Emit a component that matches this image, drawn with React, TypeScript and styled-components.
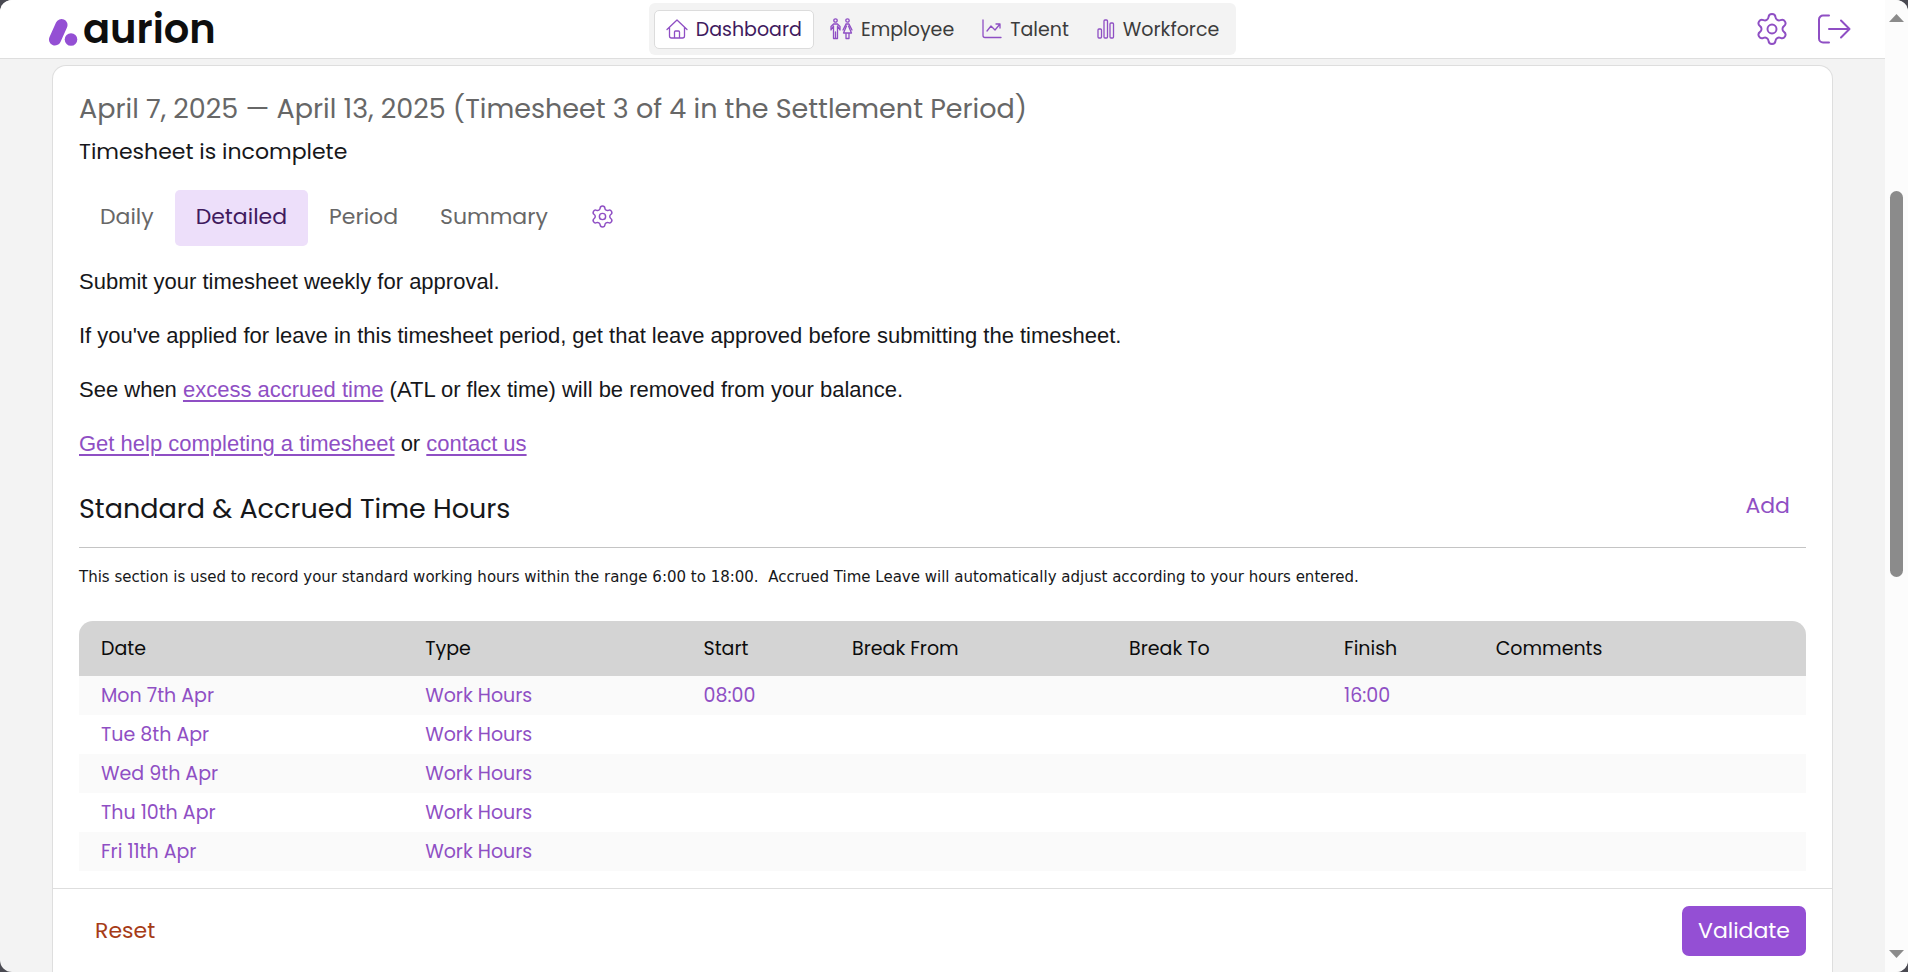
import React from 'react';
import styled, { createGlobalStyle, css } from 'styled-components';
import { Settings } from 'lucide-react';

const purple = '#8f4fc4';
const ui = 'Poppins, Inter, "Liberation Sans", sans-serif';

const GlobalStyle = createGlobalStyle`
  * { box-sizing: border-box; }
  html, body, #root { height: 100%; }
  body { margin: 0; background: #4a4a52; color: #16171a; font-family: ${ui}; }
  button { font-family: inherit; border: 0; background: none; padding: 0; cursor: pointer; }
`;

const Window = styled.div`
  height: 100vh;
  display: flex;
  border-radius: 12px;
  overflow: hidden;
  background: #f3f3f3;
`;

const Page = styled.div`
  flex: 1;
  min-width: 0;
  display: flex;
  flex-direction: column;
`;

const Header = styled.header`
  display: grid;
  grid-template-columns: 1fr auto 1fr;
  align-items: center;
  flex: none;
  height: 59px;
  padding: 0 34px;
  background: #fff;
  border-bottom: 1px solid #dedede;
`;

const Logo = styled.a`
  display: flex;
  align-items: center;
  gap: 5px;
  padding-left: 14px;
  color: #0e0e0e;
  font-size: 40px;
  line-height: 58px;
  font-weight: 600;
  text-decoration: none;
  svg { display: block; margin-top: 6px; }
`;

const MainNav = styled.nav`
  display: flex;
  align-items: center;
  gap: 4px;
  height: 52px;
  padding: 0 5px;
  border-radius: 6px;
  background: #f3f3f3;
`;

const NavLink = styled.a<{ $active?: boolean }>`
  display: flex;
  align-items: center;
  gap: 8px;
  height: 39px;
  padding: 0 11px;
  border: 1px solid transparent;
  border-radius: 5px;
  color: #3c3c3c;
  font-size: 19px;
  text-decoration: none;
  white-space: nowrap;
  svg { display: block; flex: none; }
  ${p => p.$active && css`
    background: #fff;
    border-color: #dcdcdc;
    color: #401a5e;
  `}
`;

const HeaderTools = styled.div`
  display: flex;
  align-items: center;
  justify-content: flex-end;
  gap: 27px;
  svg { display: block; }
`;

const Card = styled.main`
  flex: 1;
  min-height: 0;
  display: flex;
  flex-direction: column;
  margin: 6px 52px 0;
  background: #fff;
  border: 1px solid #dedede;
  border-bottom: 0;
  border-radius: 14px 14px 0 0;
`;

const Content = styled.div`
  flex: 1;
  min-height: 0;
  overflow: hidden;
  padding: 25px 26px 0;
`;

const Title = styled.h1`
  margin: 0;
  color: #676767;
  font-size: 27px;
  line-height: 36px;
  font-weight: 400;
`;

const Status = styled.p`
  margin: 8px 0 0;
  font-size: 22px;
  line-height: 34px;
`;

const Tabs = styled.div`
  display: flex;
  align-items: center;
  margin: 21px 0 20px;
`;

const Tab = styled.button<{ $active?: boolean }>`
  height: 56px;
  padding: 0 21px 4px;
  border-radius: 5px;
  color: ${p => (p.$active ? '#401a5e' : '#676767')};
  background: ${p => (p.$active ? '#eddffa' : 'transparent')};
  font-size: 22px;
  svg { display: block; }
`;

const Notes = styled.div`
  font-family: Arial, "Liberation Sans", sans-serif;
  font-size: 22px;
  line-height: 32px;
  p { margin: 0 0 22px; }
  a { color: ${purple}; text-underline-offset: 3px; text-decoration-thickness: 2px; }
`;

const SectionHead = styled.div`
  display: flex;
  align-items: flex-start;
  justify-content: space-between;
  height: 66px;
  padding-top: 5px;
  border-bottom: 1px solid #c4c4c4;
`;

const SectionTitle = styled.h2`
  margin: 0;
  font-size: 27px;
  line-height: 44px;
  font-weight: 400;
`;

const TextButton = styled.button<{ $danger?: boolean }>`
  padding: 0 16px;
  color: ${p => (p.$danger ? '#a63b16' : purple)};
  font-size: 22px;
  line-height: 38px;
`;

const Hint = styled.p`
  margin: 17px 0 32px;
  font-family: Verdana, "DejaVu Sans", sans-serif;
  font-size: 15px;
  line-height: 24px;
  white-space: pre-wrap;
`;

const Table = styled.table`
  width: 100%;
  table-layout: fixed;
  border-collapse: separate;
  border-spacing: 0;
  font-size: 19px;
  th, td { padding: 0 0 0 22px; text-align: left; font-weight: 400; white-space: nowrap; }
  th { height: 55px; background: #d4d4d4; color: #0c0c0c; }
  th:first-child { border-top-left-radius: 14px; }
  th:last-child { border-top-right-radius: 14px; }
  td { height: 39px; }
  a { color: ${purple}; text-decoration: none; }
  tbody tr:nth-child(odd) { background: #fafafa; }
`;

const Column = styled.col<{ $share: number }>`
  width: ${p => p.$share}%;
`;

const ActionBar = styled.footer`
  flex: none;
  display: flex;
  align-items: center;
  justify-content: space-between;
  height: 84px;
  padding: 0 26px;
  border-top: 1px solid #dedede;
`;

const PrimaryButton = styled.button`
  height: 50px;
  padding: 0 16px;
  border-radius: 7px;
  background: #944fd4;
  color: #fff;
  font-size: 22px;
`;

const ScrollTrack = styled.div`
  flex: none;
  width: 23px;
  display: flex;
  flex-direction: column;
  align-items: center;
  justify-content: space-between;
  padding: 14px 0;
  background: #fcfcfc;
`;

const ScrollRun = styled.div`
  flex: 1;
  display: grid;
  grid-template-rows: 169fr 386fr 373fr;
`;

const ScrollThumb = styled.div`
  grid-row: 2;
  width: 13px;
  border-radius: 7px;
  background: #8b8b8b;
`;

const stroke = { fill: 'none', stroke: purple, strokeWidth: 1.3, strokeLinecap: 'round', strokeLinejoin: 'round' } as const;

const HomeIcon = () => (
  <svg width="22" height="20" viewBox="0 0 22 20" {...stroke}>
    <path d="M1 10.500 11 1l10 9.500M3.500 8.500v8.500a2 2 0 0 0 2 2h11a2 2 0 0 0 2-2V8.500M8.500 19v-6a1 1 0 0 1 1-1h3a1 1 0 0 1 1 1v6" />
  </svg>
);
const PeopleIcon = () => (
  <svg width="23" height="22" viewBox="0 0 23 22" {...stroke}>
    <circle cx="5.500" cy="2.500" r="1.700" />
    <path d="M3.500 20.500V8L1 12V8.500L3.500 6h4L10 8.500V12L7.500 8v12.500M3.500 20.500h4M5.500 14v6.500" />
    <circle cx="17.500" cy="2.500" r="1.700" />
    <path d="M16 6h3l3 6M16 6l-3 6M16.500 8 13.500 15h8l-3-7M16 15v5.500h3V15" />
  </svg>
);
const TrendIcon = () => (
  <svg width="20" height="20" viewBox="0 0 20 20" {...stroke}>
    <path d="M1 1v15.500a2 2 0 0 0 2 2h16M5 12l4-5 4 4 5-6M14 5h4v4" />
  </svg>
);
const BarsIcon = () => (
  <svg width="18" height="20" viewBox="0 0 18 20" {...stroke}>
    <rect x="1" y="10" width="3.500" height="9" rx="1" />
    <rect x="7" y="1" width="3.500" height="18" rx="1" />
    <rect x="13" y="4" width="3.500" height="15" rx="1" />
  </svg>
);

const menu = [
  { label: 'Dashboard', icon: <HomeIcon />, active: true },
  { label: 'Employee', icon: <PeopleIcon /> },
  { label: 'Talent', icon: <TrendIcon /> },
  { label: 'Workforce', icon: <BarsIcon /> },
];

const columns = [
  { label: 'Date', share: 18.77 },
  { label: 'Type', share: 16.12 },
  { label: 'Start', share: 8.6 },
  { label: 'Break From', share: 16.04 },
  { label: 'Break To', share: 12.45 },
  { label: 'Finish', share: 8.78 },
  { label: 'Comments', share: 19.24 },
];

const rows = [
  ['Mon 7th Apr', 'Work Hours', '08:00', '', '', '16:00', ''],
  ['Tue 8th Apr', 'Work Hours', '', '', '', '', ''],
  ['Wed 9th Apr', 'Work Hours', '', '', '', '', ''],
  ['Thu 10th Apr', 'Work Hours', '', '', '', '', ''],
  ['Fri 11th Apr', 'Work Hours', '', '', '', '', ''],
];

export default function App() {
  return (
    <>
      <GlobalStyle />
      <Window>
        <Page>
          <Header>
            <Logo href="#">
              <svg width="30" height="29" viewBox="0 0 30 29" aria-hidden="true">
                <path d="M7 21.500 13.500 7" stroke="#944fd4" strokeWidth="12" strokeLinecap="round" />
                <circle cx="23" cy="21.500" r="6.300" fill="#944fd4" />
              </svg>
              aurion
            </Logo>
            <MainNav>
              {menu.map(m => (
                <NavLink key={m.label} href="#" $active={m.active}>{m.icon}{m.label}</NavLink>
              ))}
            </MainNav>
            <HeaderTools>
              <button aria-label="Settings"><Settings size={36} strokeWidth={1.3} color={purple} /></button>
              <button aria-label="Sign out">
                <svg width="34" height="32" viewBox="0 0 34 32" fill="none" stroke={purple} strokeWidth="2" strokeLinecap="round" strokeLinejoin="round">
                  <path d="M12 2.500H6a4 4 0 0 0-4 4v19a4 4 0 0 0 4 4h6M12 16h20M24 7.500 32.500 16 24 24.500" />
                </svg>
              </button>
            </HeaderTools>
          </Header>
          <Card>
            <Content>
              <Title>April 7, 2025 — April 13, 2025 (Timesheet 3 of 4 in the Settlement Period)</Title>
              <Status>Timesheet is incomplete</Status>
              <Tabs>
                <Tab>Daily</Tab>
                <Tab $active>Detailed</Tab>
                <Tab>Period</Tab>
                <Tab>Summary</Tab>
                <Tab aria-label="Timesheet settings"><Settings size={25} strokeWidth={1.4} color={purple} /></Tab>
              </Tabs>
              <Notes>
                <p>Submit your timesheet weekly for approval.</p>
                <p>If you've applied for leave in this timesheet period, get that leave approved before submitting the timesheet.</p>
                <p>See when <a href="#">excess accrued time</a> (ATL or flex time) will be removed from your balance.</p>
                <p><a href="#">Get help completing a timesheet</a> or <a href="#">contact us</a></p>
              </Notes>
              <SectionHead>
                <SectionTitle>Standard &amp; Accrued Time Hours</SectionTitle>
                <TextButton>Add</TextButton>
              </SectionHead>
              <Hint>{'This section is used to record your standard working hours within the range 6:00 to 18:00.  Accrued Time Leave will automatically adjust according to your hours entered.'}</Hint>
              <Table>
                <colgroup>{columns.map(c => <Column key={c.label} $share={c.share} />)}</colgroup>
                <thead><tr>{columns.map(c => <th key={c.label} scope="col">{c.label}</th>)}</tr></thead>
                <tbody>
                  {rows.map(r => (
                    <tr key={r[0]}>{r.map((v, i) => <td key={i}>{v && <a href="#">{v}</a>}</td>)}</tr>
                  ))}
                </tbody>
              </Table>
            </Content>
            <ActionBar>
              <TextButton $danger>Reset</TextButton>
              <PrimaryButton>Validate</PrimaryButton>
            </ActionBar>
          </Card>
        </Page>
        <ScrollTrack aria-hidden="true">
          <svg width="15" height="8" viewBox="0 0 15 8"><path d="M7.500 0 15 8H0z" fill="#8b8b8b" /></svg>
          <ScrollRun><ScrollThumb /></ScrollRun>
          <svg width="15" height="8" viewBox="0 0 15 8"><path d="M0 0h15L7.500 8z" fill="#8b8b8b" /></svg>
        </ScrollTrack>
      </Window>
    </>
  );
}
